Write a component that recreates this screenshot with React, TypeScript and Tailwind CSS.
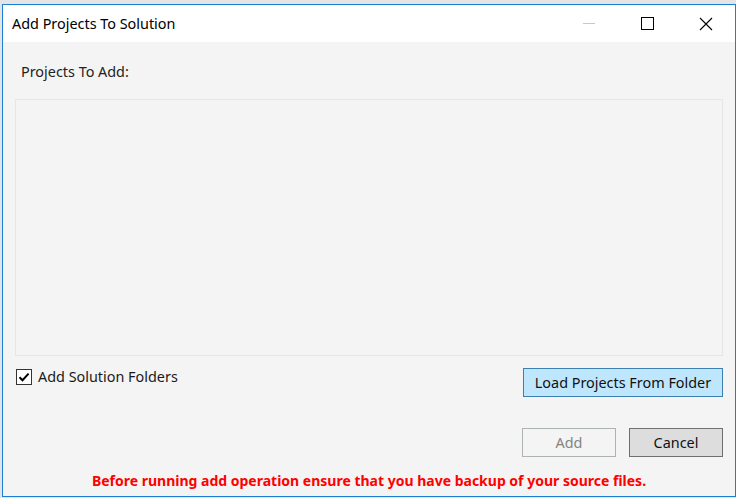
import React from 'react';

const CaptionButton: React.FC<{ children: React.ReactNode }> = ({ children }) => (
  <div className="w-[58.6px] h-full flex items-center justify-center">{children}</div>
);

const App: React.FC = () => {
  return (
    <div className="w-[736px] h-[498px] bg-[#e4e4e4] overflow-hidden font-['Noto_Sans',sans-serif] text-[#1a1a1a]">
      <div className="ml-[2px] mt-[4px] w-[734px] h-[493px] border border-[#1b7fd6] flex flex-col">
        {/* title bar */}
        <div className="h-[37px] bg-white flex items-center">
          <span className="pl-[9px] text-[14.4px] leading-[20px] text-black flex-1">Add Projects To Solution</span>
          <div className="flex h-full">
            <CaptionButton>
              <div className="w-[12px] h-px bg-[#c8c8c8]" />
            </CaptionButton>
            <CaptionButton>
              <div className="w-[13px] h-[13px] border border-black" />
            </CaptionButton>
            <CaptionButton>
              <svg width="14" height="14" viewBox="0 0 14 14" className="text-black">
                <path d="M1 1 L13 13 M13 1 L1 13" stroke="currentColor" strokeWidth="1.1" fill="none" />
              </svg>
            </CaptionButton>
          </div>
        </div>

        {/* body */}
        <div className="flex-1 bg-[#f4f4f4] flex flex-col pl-[12px] pr-[12px]">
          <div className="pt-[20px] pl-[6px] text-[14.4px] leading-[20px] text-[#222]">Projects To Add:</div>

          <div className="mt-[17px] h-[257px] border border-[#e6e6e6] bg-[#f4f4f4]" />

          <div className="mt-[12px] h-[29px] flex items-start justify-between">
            <label className="flex items-center pl-px mt-px">
              <span className="w-[16px] h-[16px] border border-[#333] bg-white flex items-center justify-center">
                <svg width="12" height="12" viewBox="0 0 12 12">
                  <path d="M1.5 6.2 L4.5 9.2 L10.6 2.6" stroke="#000" strokeWidth="2" fill="none" />
                </svg>
              </span>
              <span className="ml-[6px] text-[14.4px] leading-[16px] text-[#1a1a1a]">Add Solution Folders</span>
            </label>
            <button className="w-[200px] h-[29px] bg-[#bee6fd] border border-[#3c7fb1] text-[14.4px] leading-[20px] text-[#111]">
              Load Projects From Folder
            </button>
          </div>

          <div className="mt-[31px] flex justify-end gap-[13px]">
            <button className="w-[94px] h-[29px] border border-[#adb2b5] bg-[#f4f4f4] text-[14.4px] text-[#838383]">Add</button>
            <button className="w-[94px] h-[29px] border border-[#707070] bg-[#dddddd] text-[14.4px] text-[#111]">Cancel</button>
          </div>

          <div className="mt-[14px] text-center text-[14px] leading-[20px] font-bold text-[#ff0000]">
            Before running add operation ensure that you have backup of your source files.
          </div>
        </div>
      </div>
    </div>
  );
};

export default App;
